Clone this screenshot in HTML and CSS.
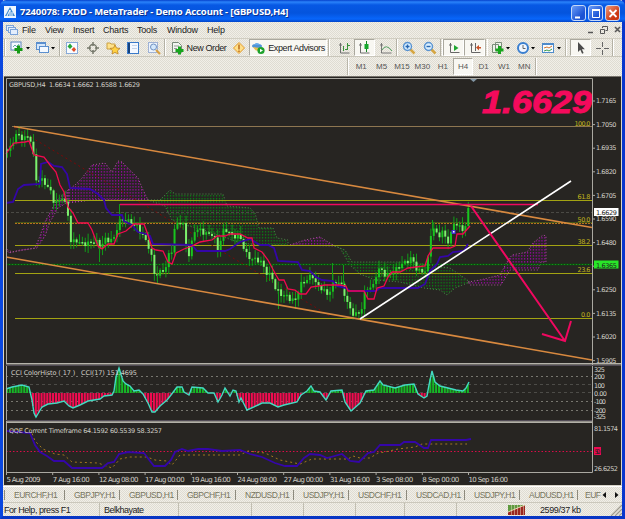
FILE: index.html
```html
<!DOCTYPE html>
<html>
<head>
  <meta charset="utf-8">
  <title>7240078: FXDD - MetaTrader - Demo Account - [GBPUSD,H4]</title>
  <link rel="stylesheet" href="styles.css">
</head>
<body>
<div class="window">
  <div class="titlebar">
    <svg class="logo" width="12" height="12"><rect width="12" height="12" fill="#eef6ff"/><path d="M1 10 L6 1 L11 10 Z" fill="#3f8ad0"/><path d="M3 10 L6 4 V10 M8 6 V10" stroke="#fff" fill="none"/></svg>
    <span class="title">7240078: FXDD - MetaTrader - Demo Account - [GBPUSD,H4]</span>
    <div class="winbtns">
      <svg class="winbtn" width="15" height="16"><path d="M3 11.5 h5" stroke="#fff" stroke-width="2"/></svg>
      <svg class="winbtn" width="15" height="16"><path d="M3.5 4 v7.5 h7 V4" stroke="#fff" fill="none"/><path d="M3 4 h8" stroke="#fff" stroke-width="2"/></svg>
      <svg class="winbtn close" width="15" height="16"><path d="M3.5 4 l7 7 M10.5 4 l-7 7" stroke="#fff" stroke-width="1.8"/></svg>
    </div>
  </div>

  <div class="menubar">
    <svg class="menuicon" width="12" height="12"><g fill="#e4eefc" stroke="#7ba3d8"><rect x="0.5" y="1.5" width="7" height="5"/><rect x="2.5" y="3.5" width="7" height="5"/><rect x="4.5" y="5.5" width="7" height="5"/></g></svg>
    <span class="m-file">File</span><span class="m-view">View</span><span class="m-insert">Insert</span><span class="m-charts">Charts</span><span class="m-tools">Tools</span><span class="m-window">Window</span><span class="m-help">Help</span>
    <svg class="mdi" width="36" height="12"><g stroke="#555" fill="none"><path d="M3 8.5 h5" stroke-width="1.5"/><path d="M17.5 4 V2.5 h5 v4 h-2 M15.5 5.5 h4 v4 h-4 z"/><path d="M30 3 l5 5 M35 3 l-5 5" stroke-width="1.6"/></g></svg>
  </div>

  <div class="toolbar">
    <div class="grip w5"></div>
    <div class="tool w23"><svg width="20" height="14"><rect x="1" y="1" width="10" height="8" fill="#f5f9ff" stroke="#5c86bd"/><path d="M3 6 l2 -2 2 2 2 -3" stroke="#6aa" fill="none"/><path d="M8.500 4.500 v8 M4.500 8.500 h8" stroke="#159a15" stroke-width="3"/><path d="M16 6 h4 l-2 2.500z"/></svg></div>
    <div class="tool w28"><svg width="20" height="14"><rect x="1.500" y="1.500" width="9" height="7" fill="#d6e7fa" stroke="#5b8fce"/><path d="M1 2 h10" stroke="#5b8fce" stroke-width="2"/><rect x="4.500" y="5.500" width="9" height="6" fill="#f4f9ff" stroke="#5b8fce"/><path d="M16 6 h4 l-2 2.500z"/></svg></div>
    <div class="sep w2"></div>
    <div class="tool w22"><svg width="14" height="14"><rect x="1.500" y="1.500" width="11" height="11" fill="#f8fbff" stroke="#88aad8"/><path d="M5 2.500 l2.500 3 -2.500 2.500 -2.500 -2.500z" fill="#24a736"/><path d="M9 6 l2 2.500 -2 2.500 -2.500 -2.500z" fill="#e24d26"/></svg></div>
    <div class="tool w20"><svg width="14" height="14"><circle cx="7" cy="7" r="3.500" fill="none" stroke="#777a6c" stroke-width="1.300"/><path d="M7 1 v4 M7 9 v4 M1 7 h4 M9 7 h4" stroke="#777a6c" stroke-width="1.500"/></svg></div>
    <div class="tool w20"><svg width="15" height="14"><path d="M1 3 v5 h8 V3 H5 L4 2 H1z" fill="#ffe28b" stroke="#caa044"/><path d="M9 4 l1.500 3 3.500 .4 -2.500 2.300 .6 3.300 -3.100 -1.600 -3 1.600 .5 -3.300 -2.500 -2.300 3.500 -.4z" fill="#ffd142" stroke="#b98124" stroke-width=".8"/></svg></div>
    <div class="tool w20"><svg width="14" height="14"><rect x="1.500" y="1.500" width="11" height="11" fill="#f4f8ff" stroke="#3979c9"/><path d="M3 2 v10" stroke="#15417c" stroke-width="2"/><path d="M6 4.500 h5 M6 7.500 h5" stroke="#c4d4ea"/></svg></div>
    <div class="tool w21"><svg width="14" height="14"><rect x="1.500" y="1.500" width="9" height="10" fill="#edf3fb" stroke="#9fb2d5"/><circle cx="6.500" cy="6" r="3" fill="#d4e8fc" stroke="#6f91c2"/><path d="M9 9 l4 4" stroke="#d89e3d" stroke-width="2"/></svg></div>
    <div class="sep w2"></div>
    <div class="tool neworder"><svg width="14" height="14"><path d="M1.500 1.500 h6 l3 3 v7 h-9z" fill="#f2f5f0" stroke="#788878"/><path d="M3 5 h5 M3 7.500 h3" stroke="#999"/><path d="M8.500 5.500 v8 M4.500 9.500 h8" stroke="#18a51e" stroke-width="3"/></svg><span>New Order</span></div>
    <div class="tool w21"><svg width="14" height="14"><path d="M7 1.500 L12.500 7 7 12.500 1.500 7z" fill="#ffe08a" stroke="#e39a2b"/><path d="M7 3.500 v5 M7 9.500 v1.500" stroke="#b66313" stroke-width="1.400"/></svg></div>
    <div class="tool expert on"><svg width="14" height="14"><ellipse cx="6" cy="5" rx="5" ry="2" fill="#4f93d5"/><path d="M2.500 4 q3.500 -4 7 0z" fill="#63a8e8"/><path d="M2 6 q4 7 7 1z" fill="#e8bd4d"/><circle cx="10" cy="9.500" r="3.600" fill="#1da12b"/><path d="M9 7.800 l3 1.700 -3 1.700z" fill="#fff"/></svg><span>Expert Advisors</span></div>
    <div class="grip w8"></div>
    <div class="tool w19"><svg width="14" height="14"><path d="M2.500 2 v10 h9 M1 4 h3" stroke="#6d6d6d" fill="none"/><path d="M5.500 5 v5 M9.500 2 v7 M9 4.500 h3 M7 8.500 h2" stroke="#389239" fill="none"/></svg></div>
    <div class="tool w21 on"><svg width="14" height="14"><path d="M2.500 2 v10 h9 M1 4 h3" stroke="#6d6d6d" fill="none"/><path d="M8.500 0 v11" stroke="#168623"/><rect x="6.500" y="3" width="4" height="5" fill="#16a72c"/></svg></div>
    <div class="tool w21"><svg width="14" height="14"><path d="M2.500 2 v10 h10 M1 4 h3" stroke="#777" fill="none"/><path d="M3 9 q4 -7 10 1" stroke="#54a064" fill="none"/></svg></div>
    <div class="sep w2"></div>
    <div class="tool w21"><svg width="14" height="14"><path d="M8 8 l4.500 4.500" stroke="#d6a642" stroke-width="2.500"/><circle cx="5.500" cy="5.500" r="4" fill="#d9efff" stroke="#5a93d0" stroke-width="1.400"/><path d="M5.500 3.500 v4 M3.500 5.500 h4" stroke="#2766b1" stroke-width="1.400"/></svg></div>
    <div class="tool w21"><svg width="14" height="14"><path d="M8 8 l4.500 4.500" stroke="#d6a642" stroke-width="2.500"/><circle cx="5.500" cy="5.500" r="4" fill="#d9efff" stroke="#5a93d0" stroke-width="1.400"/><path d="M3.500 5.500 h4" stroke="#2766b1" stroke-width="1.400"/></svg></div>
    <div class="sep w3"></div>
    <div class="tool w21 on"><svg width="14" height="14"><path d="M3.500 2 v9.500 h9 M2 4 h3" stroke="#666" fill="none"/><path d="M7 4 l4.500 3 -4.500 3z" fill="#20a630"/></svg></div>
    <div class="tool w21 on"><svg width="14" height="14"><path d="M3.500 2 v9.500 h9 M2 4 h3 M7.500 2 v8" stroke="#666" fill="none"/><path d="M8 6.500 l3 -2.500 v2 h2 v1.500 h-2 v2z" fill="#ca5126"/></svg></div>
    <div class="sep w3"></div>
    <div class="tool w25"><svg width="20" height="14"><path d="M1.500 3.500 h6 v8 h-6z M4.500 1.500 h6 v8 h-6z" fill="#eef2ea" stroke="#7a8c79"/><path d="M8.500 5 v8 M4.500 9 h8" stroke="#18a51e" stroke-width="3"/><path d="M15 6 h4 l-2 2.500z"/></svg></div>
    <div class="tool w25"><svg width="20" height="14"><circle cx="7" cy="7" r="5" fill="#f1f7ff" stroke="#3a7fd0" stroke-width="2"/><path d="M7 4 v3.500 h2.500" stroke="#666" fill="none"/><path d="M15 6 h4 l-2 2.500z"/></svg></div>
    <div class="tool w26"><svg width="20" height="14"><rect x="1.500" y="2.500" width="11" height="9" fill="#f8fbff" stroke="#4e8bca"/><path d="M1 3 h12" stroke="#4e8bca" stroke-width="2"/><path d="M3 7 l3 -1 2 1 3 -2" stroke="#d5752c" fill="none"/><path d="M3 10 l3 -1 2 1 3 -2" stroke="#3a9b4c" fill="none"/><path d="M16 6 h4 l-2 2.500z"/></svg></div>
    <div class="grip w6"></div>
    <div class="tool w21 on"><svg width="14" height="14"><path d="M4 1 v10 l2.300 -2.300 1.800 4 1.500 -.7 -1.700 -3.700 h3z" fill="#4b4b4b"/></svg></div>
    <div class="tool w21"><svg width="14" height="14"><path d="M7.500 1 v5 M7.500 9 v5 M1 7.500 h5 M9 7.500 h5" stroke="#666"/></svg></div>
    <div class="sep w2"></div>
  </div>

  <div class="periods">
    <div class="grip w5"></div>
    <span>M1</span><span>M5</span><span>M15</span><span>M30</span><span>H1</span><span class="on">H4</span><span>D1</span><span>W1</span><span>MN</span>
    <div class="sep w2"></div>
  </div>

  <svg class="chart" width="619" height="410" viewBox="3 76 619 410">
    <defs>
      <pattern id="greendots" width="2.88" height="3" patternUnits="userSpaceOnUse"><rect width="1.100" height="1.500" fill="#087f12"/></pattern>
      <pattern id="purpledots" width="2.88" height="3" patternUnits="userSpaceOnUse"><rect width="1.100" height="1.600" fill="#9408a0"/></pattern>
    </defs>
    <rect x="3" y="76" width="619" height="410" fill="#d9d5c9"/>
    <rect x="4" y="77" width="617" height="408" fill="#272522"/>
    <path d="M4 76.500 H621" stroke="#77736c"/>

    <!-- clouds -->
    <g class="cloud purple">
      <path d="M6 249 L9 253 20 250 35 248 40 236 45 222 53 207 57 200 68 190 68 202 58 208 50 222 45 236 37 248 12 252Z"/>
      <path d="M68 190 L75 185 82 178 92 165 105 163 112 172 118 161 122 162 130 170 138 178 143 190 148 200 92 200 68 203Z"/>
      <path d="M290 245 L305 240 320 237 328 242 335 246Z"/>
      <path d="M468 282 L480 280 500 275 507 262 512 255 527 252 533 243 543 235 546 236 546 262 541 262 538 270 510 270 501 285 470 285Z"/>
    </g>
    <g class="cloud green">
      <path d="M148 200 L160 200 170 190 175 194 223 194 227 206 250 208 255 213 259 228 273 228 277 238 288 240 288 245 260 245 240 243 210 232 182 224 172 220 165 206Z"/>
      <path d="M335 246 L345 250 352 262 410 262 420 264 450 268 460 275 470 282 455 288 447 295 440 290 424 288 400 282 375 280 360 274 350 265 340 248Z"/>
    </g>

    <!-- fibo levels -->
    <path d="M6 212.500 H592" stroke="#4b4a45" stroke-dasharray="3 2"/>
    <path d="M6 264.500 H592" stroke="#075d0b" stroke-width="1.500"/>
    <path d="M6 264.500 H592" stroke="#168c1e" stroke-dasharray="1 2"/>
    <path d="M12 126.500 H592" stroke="#8e7651"/>
    <path d="M15 222.500 H592" stroke="#465617"/>
    <path d="M15 223.500 H592" stroke="#b8741d" stroke-dasharray="2 1"/>
    <path d="M15 200.500 H592 M15 245.500 H592 M15 273.500 H592 M15 318.500 H592" stroke="#a3a312"/>
    <path d="M14 127 L330 316" stroke="#7b0808" stroke-dasharray="2 3"/>

    <g id="candles"></g>
    <polyline class="kijun" points="6,203 13,202 18,189 24,185 40,184 41,164 48,162 54,166 62,167 67,174 70,188 90,189 98,194 104,200 106,208 112,215 122,215 124,221 132,225 138,232 146,234 150,236 153,244 192,245 197,251 225,251 230,249 240,242 250,239 260,245 268,245 274,248 278,261 298,262 302,270 310,271 316,277 322,280 333,281 337,286 346,288 350,291 376,291 380,288 418,288 425,284 430,271 437,264 440,257 448,256 453,252 464,251 468,244"/>
    <polyline class="tenkan" points="6,154 10,148 14,143 25,142 29,141 34,155 44,157 50,165 56,172 60,185 64,192 68,207 73,213 78,223 88,223 92,230 98,246 102,249 108,244 114,244 118,234 126,231 134,224 144,224 148,235 152,248 156,250 163,251 168,262 172,264 176,253 184,249 192,246 200,242 212,240 217,236 225,236 230,234 240,234 248,238 252,238 254,248 262,252 268,260 276,275 279,280 284,280 288,289 295,290 300,294 306,294 311,287 325,285 340,285 346,286 348,291 364,291 368,299 374,299 377,288 384,286 388,277 392,272 400,272 408,268 425,266 428,256 433,248 450,248 455,246 457,234 463,234 470,226"/>
    <path d="M14 126.500 L592 227.500 M6 257 L592 360" stroke="#d8893f" stroke-width="1.600"/>
    <path d="M120 204.500 H538" stroke="#f00860" stroke-width="1.500"/>
    <path d="M360 319 L571 181" stroke="#fff" stroke-width="1.600"/>
    <path d="M471 206 L565 341 M542 334 L565 341 571 321" stroke="#f00860" stroke-width="2" fill="none"/>
    <rect x="451.500" y="230" width="4" height="4" fill="#4633d8"/><rect x="453" y="231" width="1.500" height="1.500" fill="#fff"/>

    <text x="9" y="87" class="lbl" textLength="131">GBPUSD,H4&#160; 1.6634 1.6662 1.6588 1.6629</text>
    <text x="482" y="113" class="bigprice" textLength="110" lengthAdjust="spacingAndGlyphs">1.6629</text>
    <path d="M470 79 h7 l-3.500 3z" fill="#8296a4"/>
    <g class="fibo">
      <text x="574.500" y="125.500" textLength="16">100.0</text>
      <text x="577.500" y="199" textLength="13">61.8</text>
      <text x="577.500" y="221.500" textLength="13">50.0</text>
      <text x="577.500" y="243.500" textLength="13">38.2</text>
      <text x="577.500" y="272" textLength="13">23.6</text>
      <text x="581" y="317" textLength="9.500">0.0</text>
    </g>

    <!-- cci -->
    <path d="M6 376.500 H592 M6 401.500 H592 M6 410.500 H592" stroke="#77766f" stroke-dasharray="2 3"/>
    <path d="M6 384.500 H592 M6 392.500 H592" stroke="#4d4c48" stroke-dasharray="3 3"/>
    <g id="histogram"></g>
    <polyline id="cciline" fill="none" stroke="#43d9c1" stroke-width="1.400"/>
    <text x="11" y="375" class="lbl" textLength="126">CCI ColorHisto ( 17 )&#160;&#160; CCI(17) 151.4695</text>

    <!-- qqe -->
    <path d="M6 451.500 H592" stroke="#d90c48" stroke-dasharray="1.500 2"/>
    <polyline fill="none" stroke="#a2791e" stroke-dasharray="2 3" points="6,431 30,428 35,441 43,449 55,454 64,455 72,462 98,463 112,468 120,459 130,457 147,457 155,460 167,461 172,465 180,455 240,455 248,451 265,453 280,460 300,464 312,459 348,459 353,456 360,458 370,458 378,453 385,452 398,449 415,447 422,444 467,444"/>
    <polyline class="kijun" points="6,431 30,433 35,445 40,452 47,456 54,461 64,461 72,468 102,468 108,463 114,462 119,454 128,452 144,453 150,461 154,466 165,466 171,460 175,452 182,449 188,451 198,449 208,449 222,451 240,450 250,454 262,457 275,463 285,466 297,466 304,458 310,454 320,455 327,458 342,454 350,461 359,462 368,453 374,452 380,445 400,445 404,442 415,442 424,448 428,448 431,440 466,440 471,439"/>
    <text x="9" y="432.500" class="lbl" textLength="153">QQE Current Timeframe 64.1592 60.5539 58.3257</text>

    <!-- frames -->
    <path d="M6.500 363 V78.500 H592.500 V472.500 H6.500 V365 M592 363.500 H6 M6 422.500 H592" fill="none" stroke="#aaa8a1"/>
    <path d="M6 363.700 H621 M6 422 H592" stroke="#b5b3ab" stroke-width="1.400"/>
    <path d="M5.500 365.500 H621 M6 420.500 H592" stroke="#514b55"/>
    <g id="scale" class="scale"></g>
    <rect x="594" y="208" width="24.500" height="8" fill="#fff"/><text x="596" y="214.500" class="lbl dark" textLength="21">1.6629</text>
    <rect x="594" y="260.500" width="24.500" height="8" fill="#28e728"/><text x="596" y="267.500" class="lbl dark" textLength="21">1.6365</text>
    <g class="scale">
      <text x="594" y="372" textLength="11">325</text><text x="594" y="378.500" textLength="11">200</text>
      <text x="594" y="387.500" textLength="11">100</text><text x="594" y="395.500" textLength="13">0.00</text>
      <text x="594" y="404" textLength="12">-100</text><text x="594" y="412.500" textLength="12">-200</text><text x="594" y="419" textLength="12">-325</text>
      <text x="594" y="430.500" textLength="24">81.1574</text><text x="594" y="470.500" textLength="24">26.6252</text>
    </g>
    <rect x="594" y="447" width="7" height="8" fill="#f00850"/><text x="594.500" y="454" class="lbl dark" textLength="6">50</text>
    <g id="dates" class="dates"></g>
  </svg>

  <div class="tabs">
    <span class="t1">EURCHF,H1</span><span class="t2">GBPJPY,H1</span><span class="t3">GBPUSD,H1</span><span class="t3">GBPCHF,H1</span><span class="t3">NZDUSD,H1</span><span class="t2">USDJPY,H1</span><span class="t3">USDCHF,H1</span><span class="t3">USDCAD,H1</span><span class="t2">USDJPY,H1</span><span class="t3">AUDUSD,H1</span><span class="t4">EUF</span>
    <svg width="20" height="10"><path d="M5 2 v6 l-3.500 -3z M14 2 v6 l3.500 -3z" fill="#111"/></svg>
  </div>

  <div class="status">
    <span class="s1">For Help, press F1</span><span class="s2">Belkhayate</span><span class="s3"></span><span class="s4"></span><span class="s4"></span><span class="s5"></span><span class="s4"></span>
    <div class="traffic"><svg width="17" height="10"><rect width="17" height="10" fill="#9b271f"/><path d="M0 0 H17 L0 7z" fill="#5f9a3f"/><path d="M0 7 L17 0" stroke="#e8d8b0"/><path d="M3.500 0 v10 M6.500 0 v10 M9.500 0 v10 M12.500 0 v10 M15.500 0 v10" stroke="#e8dcc8" stroke-width=".5"/></svg><span>2599/37 kb</span></div>
    <svg class="sizer" width="12" height="13"><path d="M12 2 L1 13 M12 6 L5 13 M12 10 L9 13" stroke="#9d9a8d" stroke-width="1.300"/></svg>
  </div>
</div>
<script src="script.js"></script>
</body>
</html>
```

FILE: styles.css
```css
* {
  box-sizing: border-box;
}

body {
  margin: 0;
  overflow: hidden;
  font-family: "Liberation Sans", Arial, sans-serif;
  font-size: 9px;
  color: #222;
}

.window {
  width: 625px;
  height: 519px;
  display: flex;
  flex-direction: column;
  border: 3px solid #0a47df;
  border-top: none;
  border-right-color: #0936cd;
  border-bottom-color: #0836c4;
  background-color: #ebe8df;
  background-image: repeating-conic-gradient(#dfdcd2 0% 25%, #f1efe8 0% 50%);
  background-size: 2px 2px;
}

.titlebar {
  height: 22px;
  margin: 0 -3px;
  padding: 4px 5px 0 4px;
  display: flex;
  align-items: center;
  border-radius: 6px 6px 0 0;
  background: linear-gradient(#0541cc 0, #2a83fa 2px, #0758e4 5px, #0454dd 13px, #0866fb 19px, #0345c8 22px);
}

.logo {
  margin-top: -2px;
}

.title {
  margin: -3px 0 0 4px;
  font-family: "Noto Sans", sans-serif;
  font-size: 9.5px;
  font-weight: bold;
  letter-spacing: -0.15px;
  color: #fff;
  white-space: nowrap;
  text-shadow: 1px 1px #0b318f;
}

.winbtns {
  display: flex;
  gap: 2px;
  margin-left: auto;
  margin-top: -1px;
}

.winbtn {
  border: 1px solid #c6d9f8;
  border-radius: 3px;
  background: linear-gradient(135deg, #6b9df8, #1c53d4 70%);
}

.close {
  background: linear-gradient(135deg, #f09a7a, #cb3712 70%);
}

.menubar {
  height: 16px;
  display: flex;
  align-items: center;
}

.menubar span,
.tool span {
  white-space: nowrap;
}

.menuicon {
  margin-left: 3px;
}

.m-file { width: 23px; margin-left: 4px; }
.m-view { width: 28px; }
.m-insert { width: 30px; }
.m-charts { width: 34px; }
.m-tools { width: 30px; }
.m-window { width: 40px; }
.menubar { letter-spacing: -0.2px; }

.mdi {
  margin-left: auto;
  margin-right: 1px;
}

.toolbar {
  height: 19px;
  display: flex;
  border-top: 1px solid #d1cec2;
  border-bottom: 1px solid #c9c6ba;
}

.tool {
  display: flex;
  flex: none;
  align-items: center;
  justify-content: center;
}

.on {
  background: #f8f7f2;
  border: 1px solid #aaa89e;
  border-right-color: #fff;
  border-bottom-color: #fff;
}

.neworder {
  width: 62px;
  gap: 2px;
  padding-left: 3px;
  letter-spacing: -0.4px;
}

.expert {
  width: 78px;
  gap: 3px;
  letter-spacing: -0.4px;
}

.grip {
  flex: none;
  background: linear-gradient(90deg, transparent 1px, #bab7aa 1px, #bab7aa 2px, #fff 2px, #fff 3px, transparent 3px);
}

.sep {
  flex: none;
  border-left: 1px solid #b4b1a5;
  border-right: 1px solid #fff;
}

.w2 { width: 2px; }
.w3 { width: 3px; }
.w5 { width: 5px; }
.w6 { width: 6px; }
.w8 { width: 8px; }
.w19 { width: 19px; }
.w20 { width: 20px; }
.w21 { width: 21px; }
.w22 { width: 22px; }
.w23 { width: 23px; }
.w25 { width: 25px; }
.w26 { width: 26px; }
.w28 { width: 28px; }

.periods {
  height: 19px;
  padding: 1px 0 1px 343px;
  display: flex;
  font-size: 8px;
  color: #555;
}

.periods span {
  width: 20.4px;
  line-height: 18px;
  text-align: center;
}

.periods .on {
  line-height: 16px;
}

.chart {
  flex: none;
  display: block;
}

.lbl,
.scale,
.dates,
.fibo {
  font-family: "DejaVu Sans", sans-serif;
  font-size: 6.5px;
  fill: #d2d0c8;
}

.dates {
  font-size: 7px;
}

.fibo {
  fill: #c2b51c;
}

.dark {
  fill: #222;
}

.bigprice {
  font-family: "Liberation Sans", Arial, sans-serif;
  font-size: 31px;
  font-weight: bold;
  font-style: italic;
  fill: #f40a5c;
  stroke: #f40a5c;
  stroke-width: 1;
}

.tenkan {
  fill: none;
  stroke: #f2094e;
  stroke-width: 1.3;
}

.kijun {
  fill: none;
  stroke: #3406a8;
  stroke-width: 1.8;
}

.cloud path {
  stroke-dasharray: 1 2;
}

.purple path {
  fill: url(#purpledots);
  stroke: #b052a0;
}

.green path {
  fill: url(#greendots);
  stroke: #4c8a4a;
}

.tabs {
  height: 16px;
  display: flex;
  align-items: center;
  color: #77765f;
  font-size: 8.5px;
  border-top: 1px solid #fff;
}

.tabs span {
  flex: none;
  padding-left: 9px;
  white-space: nowrap;
  line-height: 10px;
  letter-spacing: -0.5px;
  border-left: 1px solid #8d8a7d;
}

.t1 { width: 60px; margin-left: 1px; }
.t2 { width: 55px; }
.t3 { width: 58px; }
.tabs .t4 { width: 24px; padding-left: 7px; }

.status {
  height: 14px;
  display: flex;
  border-top: 1px solid #cbc8bc;
  line-height: 14px;
}

.status > span {
  flex: none;
  white-space: nowrap;
  border-right: 1px solid #c1beb1;
}

.s1 { width: 97px; padding-left: 1px; letter-spacing: -0.45px; }
.s2 { width: 79px; padding-left: 4px; letter-spacing: -0.5px; }
.s3 { width: 73px; }
.s4 { width: 52px; }
.s5 { width: 49px; }

.traffic {
  width: 155px;
  display: flex;
  align-items: center;
  gap: 15px;
  padding-left: 51px;
  letter-spacing: -0.4px;
}

.traffic span {
  white-space: nowrap;
}

.sizer {
  margin-left: auto;
}
```

FILE: script.js
```js
var NS = "http://www.w3.org/2000/svg";
var step = 2.88;

// closing levels along the chart, x then y
var closes = [[7,149],[12,148],[15,132],[20,138],[26,137],[32,140],[34,163],[36,180],[40,179],[46,184],[50,190],[53,200],[58,203],[63,195],[66,208],[70,222],[71,244],[76,240],[82,244],[90,243],[96,241],[100,248],[104,240],[110,240],[115,238],[118,222],[122,220],[130,222],[137,226],[143,236],[148,245],[151,252],[153,272],[156,275],[161,272],[166,267],[169,254],[173,248],[175,225],[181,221],[185,229],[187,258],[191,252],[193,230],[200,230],[206,234],[213,234],[218,250],[222,235],[225,228],[232,236],[238,236],[242,240],[245,253],[250,258],[256,260],[260,260],[266,272],[272,277],[276,290],[281,294],[286,296],[292,300],[297,300],[299,286],[303,283],[308,278],[313,276],[317,286],[322,288],[328,296],[331,287],[335,282],[340,282],[344,292],[348,305],[352,313],[358,315],[362,307],[366,288],[373,287],[376,275],[380,268],[386,276],[392,273],[396,270],[400,265],[406,262],[412,258],[416,268],[420,272],[427,270],[430,236],[433,228],[438,236],[443,232],[448,242],[452,232],[454,222],[459,227],[465,230],[468,209]];

var cci = [[6,389],[12,387],[22,385],[29,387],[32,400],[34,413],[36,417],[39,412],[42,407],[48,404],[57,403],[64,401],[69,406],[73,408],[80,405],[88,401],[100,399],[104,396],[112,395],[114,391],[116,377],[119,368],[123,381],[126,384],[130,386],[134,391],[139,390],[143,394],[148,403],[152,412],[155,412],[160,406],[167,400],[171,395],[177,387],[182,387],[184,392],[189,395],[192,387],[203,388],[208,393],[214,393],[218,402],[222,395],[225,388],[230,396],[233,390],[236,391],[239,402],[241,398],[247,410],[258,405],[262,403],[270,403],[278,407],[284,405],[297,402],[301,395],[307,391],[311,386],[314,391],[320,392],[326,400],[331,391],[342,390],[345,402],[351,411],[360,403],[366,391],[374,390],[380,381],[383,385],[395,388],[405,385],[414,384],[418,394],[424,398],[427,396],[429,385],[432,371],[435,382],[440,386],[448,388],[456,390],[463,391],[466,388],[469,382]];

function add(parent, name, attrs, text) {
  var el = document.createElementNS(NS, name);
  for (var k in attrs) el.setAttribute(k, attrs[k]);
  if (text) el.textContent = text;
  document.getElementById(parent).appendChild(el);
}

function valueAt(points, x) {
  for (var i = 1; i < points.length; i++) {
    if (x <= points[i][0]) {
      var a = points[i - 1], b = points[i];
      return a[1] + (b[1] - a[1]) * (x - a[0]) / (b[0] - a[0]);
    }
  }
  return points[points.length - 1][1];
}

function drawCandle(x, n) {
  var y1 = valueAt(closes, x - step) + Math.sin(n * 2.3) * 2.5;
  var y2 = valueAt(closes, x) + Math.sin((n + 1) * 2.3) * 2.5;
  var high = Math.min(y1, y2), low = Math.max(y1, y2);
  var up = 1 + Math.abs(Math.sin(n * 5.1)) * 7;
  var down = 1 + Math.abs(Math.cos(n * 3.7)) * 6;
  add("candles", "path", { d: "M" + x + " " + (high - up) + " V" + (low + down), stroke: "#119c18" });
  add("candles", "rect", { x: x - 1, y: high, width: 2, height: Math.max(1.5, low - high), fill: y2 > y1 ? "#7df06e" : "#19c51f" });
}

for (var n = 0; n < 161; n++) drawCandle(7.5 + n * step, n);

// long wicks
[[119,204],[99,262],[332,263],[343,265],[278,309],[295,309],[157,283],[432,220]].forEach(function (p) {
  add("candles", "path", { d: "M" + p[0] + ".5 " + p[1] + " V" + valueAt(closes, p[0]), stroke: "#119c18" });
});

for (var hx = 7; hx < 469; hx += step) {
  var v = valueAt(cci, hx);
  add("histogram", "path", { d: "M" + hx + " 393 V" + v, stroke: v < 393 ? "#16b626" : "#f00b50", "stroke-width": 2.1 });
}
document.getElementById("cciline").setAttribute("points", cci.join(" "));

["1.7165", "1.7050", "1.6935", "1.6820", "1.6705", "1.6590", "1.6480", "1.6365", "1.6250", "1.6135", "1.6020", "1.5905"].forEach(function (t, i) {
  var y = 101 + i * 23.6;
  add("scale", "path", { d: "M592 " + y + " h3", stroke: "#aaa8a1" });
  if (t != "1.6365") add("scale", "text", { x: 596, y: y + 2.2, textLength: 20.5 }, t);
});

[["5 Aug 2009", 34], ["7 Aug 16:00", 37], ["12 Aug 08:00", 39.5], ["17 Aug 00:00", 39.5], ["19 Aug 16:00", 39.5], ["24 Aug 08:00", 39.5], ["27 Aug 00:00", 39.5], ["31 Aug 16:00", 40], ["3 Sep 08:00", 37], ["8 Sep 00:00", 37], ["10 Sep 16:00", 39.5]].forEach(function (d, i) {
  var x = 6.5 + i * 46.2;
  add("dates", "path", { d: "M" + x + " 472 v3", stroke: "#aaa8a1" });
  add("dates", "text", { x: x, y: 481.5, textLength: d[1] }, d[0]);
});
```
